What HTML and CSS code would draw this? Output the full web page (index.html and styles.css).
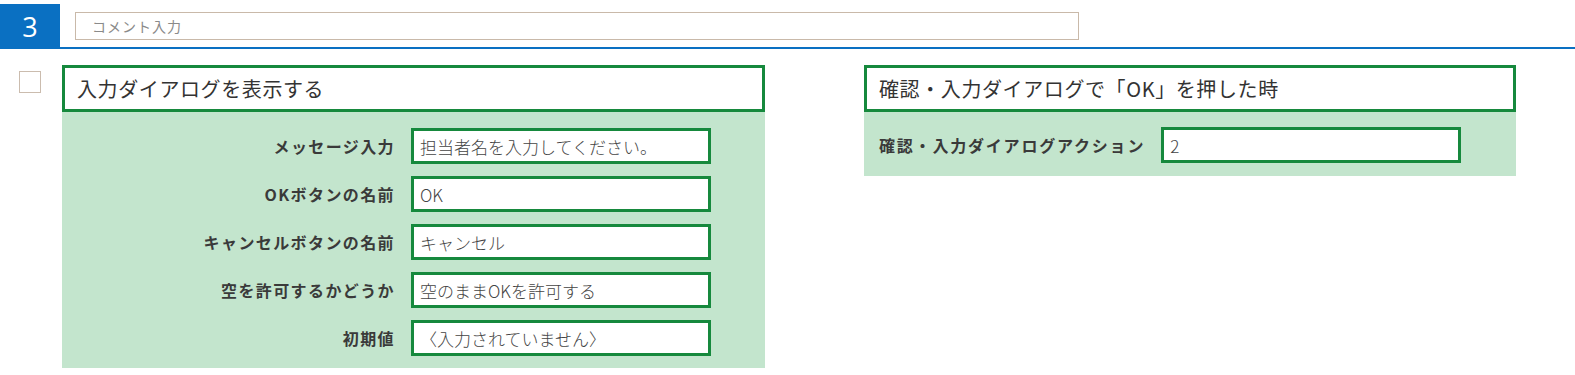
FILE: index.html
```html
<!DOCTYPE html>
<html lang="ja">
<head>
  <meta charset="UTF-8">
  <title>ステップ 3</title>
  <link rel="stylesheet" href="styles.css">
</head>
<body>

<div class="step-bar">
  <div class="step-num">3</div>
  <input type="text" class="comment" placeholder="コメント入力">
</div>

<div class="content">
  <div class="check"></div>

  <div class="card card-left">
    <div class="card-head">入力ダイアログを表示する</div>
    <div class="card-body form-grid">
      <label>メッセージ入力</label>
      <input type="text" class="field" value="担当者名を入力してください。" readonly>

      <label>OKボタンの名前</label>
      <input type="text" class="field" value="OK" readonly>

      <label>キャンセルボタンの名前</label>
      <input type="text" class="field" value="キャンセル" readonly>

      <label>空を許可するかどうか</label>
      <input type="text" class="field" value="空のままOKを許可する" readonly>

      <label>初期値</label>
      <input type="text" class="field" value="〈入力されていません〉" readonly>
    </div>
  </div>

  <div class="card card-right">
    <div class="card-head">確認・入力ダイアログで「OK」を押した時</div>
    <div class="card-body form-line">
      <label>確認・入力ダイアログアクション</label>
      <input type="text" class="field" value="2" readonly>
    </div>
  </div>
</div>

</body>
</html>
```

FILE: styles.css
```css
body {
  margin: 0;
  font-family: "Noto Sans CJK JP", "Noto Sans", sans-serif;
  color: #333;
  background: #fff;
}

/* top bar */
.step-bar {
  display: flex;
  align-items: center;
  padding-top: 4px;
  border-bottom: 2px solid #0a70c2;
}

.step-num {
  width: 60px;
  height: 43px;
  background: #0a70c2;
  color: #fff;
  font-family: "Open Sans", "Noto Sans", sans-serif;
  font-size: 27px;
  line-height: 45px;
  text-align: center;
}

.comment {
  box-sizing: border-box;
  margin-left: 15px;
  width: 1004px;
  height: 28px;
  padding: 0 0 0 16px;
  border: 1px solid #c9b9a9;
  font-family: inherit;
  font-size: 14px;
  letter-spacing: 1px;
  outline: none;
}

.comment::placeholder {
  color: #8a8a8a;
}

/* main */
.content {
  display: flex;
  align-items: flex-start;
  padding: 16px 0 0 19px;
}

.check {
  width: 20px;
  height: 20px;
  margin-top: 6px;
  margin-right: 21px;
  border: 1px solid #cbbcae;
}

.card-left {
  width: 703px;
}

.card-right {
  width: 652px;
  margin-left: 99px;
}

.card-head {
  box-sizing: border-box;
  height: 47px;
  padding-left: 12px;
  border: 3px solid #16893d;
  background: #fff;
  font-size: 20px;
  line-height: 42px;
  letter-spacing: 0.6px;
}

.card-body {
  background: #c3e5cd;
}

label {
  font-size: 16px;
  font-weight: bold;
  letter-spacing: 1.4px;
  color: #3a3a3a;
}

.field {
  box-sizing: border-box;
  width: 300px;
  height: 36px;
  padding: 0 0 0 6px;
  border: 3px solid #16893d;
  background: #fff;
  font-family: inherit;
  font-size: 17px;
  font-weight: 300;
  letter-spacing: 0;
  color: #444;
  outline: none;
}

.form-grid {
  display: grid;
  grid-template-columns: 1fr 300px;
  column-gap: 16px;
  row-gap: 12px;
  align-items: center;
  padding: 16px 54px 12px 0;
}

.form-grid label {
  text-align: right;
}

.form-line {
  display: flex;
  align-items: center;
  gap: 16px;
  padding: 15px 0 13px 15px;
}

.form-line label {
  letter-spacing: 1.8px;
}
```
